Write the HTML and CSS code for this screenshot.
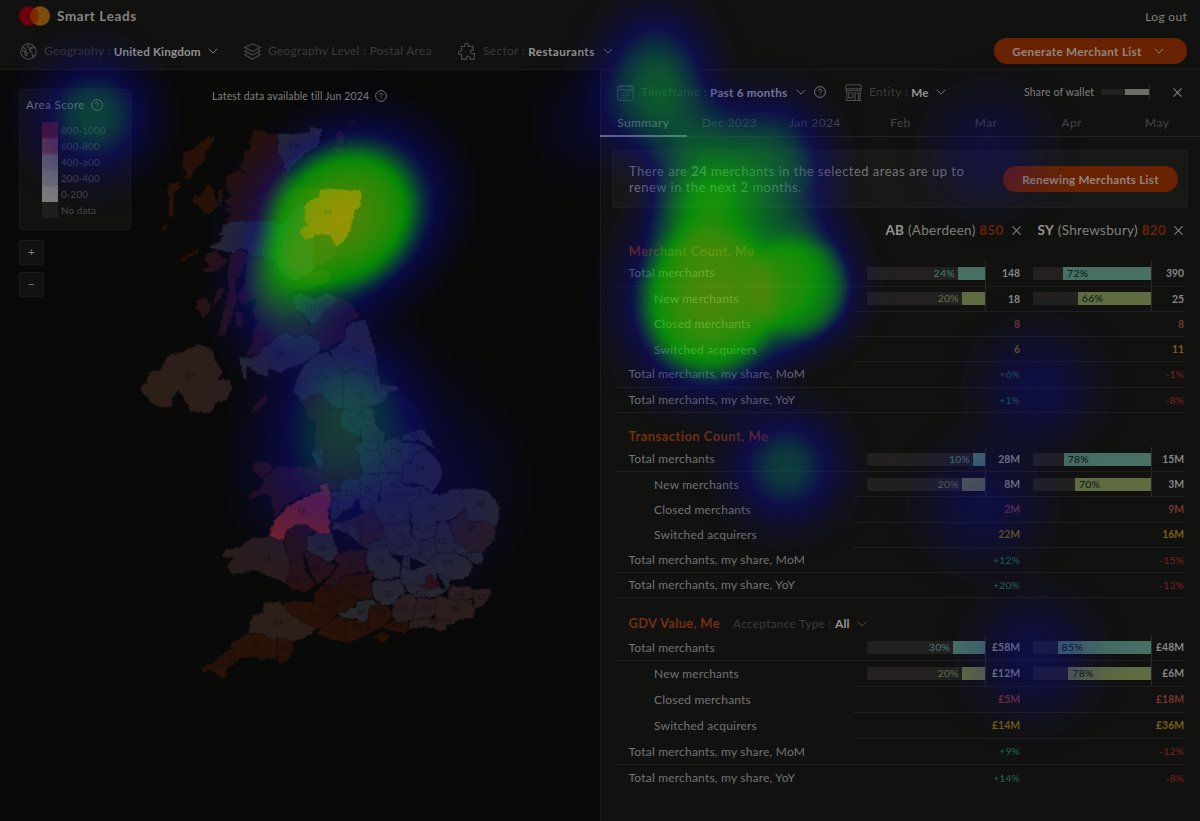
FILE: index.html
```html
<!DOCTYPE html>
<html lang="en">
<head>
<meta charset="utf-8">
<title>Smart Leads</title>
<link rel="stylesheet" href="styles.css">
</head>
<body>
<svg class="defs" width="0" height="0" aria-hidden="true">
  <symbol id="chev" viewBox="0 0 10 6"><path d="M.7.8 5 5.1 9.3.8"/></symbol>
  <symbol id="close" viewBox="0 0 8 8"><path d="M.4.4 7.6 7.6M7.6.4.4 7.6"/></symbol>
  <symbol id="help" viewBox="0 0 12 12"><circle cx="6" cy="6" r="5.4"/><path d="M4.5 4.8c0-2 3.1-2 3.1-.1C7.600 5.900 6 5.800 6 7.200M6 8.300v.8"/></symbol>
</svg>
<header class="header">
  <div class="brand-row">
    <div class="brand">
      <svg class="logo" viewBox="0 0 31 20"><circle cx="9.800" cy="10" r="9.800" fill="#6d000c"/><circle cx="21.200" cy="10" r="9.800" fill="#7c4b0b"/><path d="M15.500 2a9.800 9.800 0 0 1 0 16 9.800 9.800 0 0 1 0-16Z" fill="#7d2600"/></svg>
      <span>Smart Leads</span>
    </div>
    <a class="logout">Log out</a>
  </div>
  <div class="filter-row">
    <div class="filter geo"><svg class="ic" viewBox="0 0 16 16"><circle cx="8" cy="8" r="7.300"/><path d="M2 4.400l2.200.4 1.500 1.600-.8 1.500 2 1.500-.6 2.600-1.500-1.200-.4-2.200-2.700-2M8 1l-1 2.300 1.400 1.500M14 4.500l-3-.8-2.300 1.800.4 2 1.900.6.3 2 .8 2.800 1.700-2M9 6l3-.8"/></svg><span class="key">Geography :</span><b>United Kingdom</b><svg class="chev"><use href="#chev"/></svg></div>
    <div class="filter level"><svg class="ic" viewBox="0 0 16 16"><path d="M8 .7 15.300 4.300 8 8 .7 4.300ZM2.500 6.600.7 7.600 8 11.300l7.300-3.700-1.800-1M2.500 9.900.7 10.900 8 15.300l7.300-4.400-1.800-1"/></svg><span class="key">Geography Level : Postal Area</span></div>
    <div class="filter sector"><svg class="ic" viewBox="0 0 16 16"><path d="M3.400 3.300h3V1.900a1.700 1.700 0 0 1 3.400 0v1.400h4.500v3.400h-1.100a1.600 1.600 0 0 0 0 3.200h2.200v5.300h-4v-1.300a1.600 1.600 0 0 0-3.200 0v1.300H3.400v-4.300H2.200a1.700 1.700 0 0 1 0-3.400h1.200Z"/></svg><span class="key">Sector :</span><b>Restaurants</b><svg class="chev"><use href="#chev"/></svg></div>
    <button class="btn generate">Generate Merchant List<svg class="chev"><use href="#chev"/></svg></button>
  </div>
</header>
<main class="main">
  <section class="map-pane">
    <svg class="map" viewBox="0 70 600 751">
      <defs>
        <filter id="coast" x="-5%" y="-5%" width="110%" height="110%" color-interpolation-filters="sRGB"><feTurbulence type="fractalNoise" baseFrequency=".2" numOctaves="2" seed="4"/><feDisplacementMap in="SourceGraphic" scale="4.500" xChannelSelector="R" yChannelSelector="G"/></filter>
      </defs>
      <g filter="url(#coast)" class="areas">
        <g transform="translate(130 110) scale(.33333)">
          <path class="o" d="M252 72 255 85 240 112 222 130 232 140 212 165 195 175 178 205 160 208 172 188 158 172 160 130 175 122 190 118 215 92ZM120 222 150 212 150 232 132 250 132 290 130 320 115 318 118 265 110 235ZM238 222 250 240 258 270 268 285 240 310 225 315 215 295 188 275 192 255 212 262 222 240ZM95 352 112 340 108 355 98 365ZM155 445 180 430 208 416 200 430 170 448 158 455ZM264 245 280 235 275 270 280 300 262 270Z"/>
          <path class="o" d="M375 58 400 62 412 72 443 68 443 125 460 160 470 188 482 205 495 210 470 240 540 230 572 242 560 268 545 275 520 280 500 295 480 315 455 338 395 330 340 338 300 335 285 330 305 315 282 295 300 290 285 270 305 255 290 240 288 198 312 188 320 180 345 190 328 170 345 150 340 125 362 118 358 90Z"/>
          <path class="g" d="M443 68 480 72 535 68 540 50 575 55 568 90 560 112 530 125 505 152 490 165 472 188 460 160 443 125Z"/>
          <path class="r" d="M615 70 640 65 642 90 635 105 618 95ZM650 30 665 35 690 50 703 25 695 48 670 44ZM612 112 625 110 640 132 622 130ZM655 90 672 95 665 105Z"/>
          <path class="g" d="M285 340 300 335 400 330 455 340 480 315 515 280 530 290 522 330 530 345 508 365 522 385 550 385 555 420 550 480 535 500 490 515 460 498 440 470 440 458 405 455 395 435 360 440 350 420 330 415 310 430 235 410 260 400 280 380 265 375Z"/>
          <path class="ab" d="M525 280 545 268 565 262 570 240 590 235 660 240 690 238 695 255 692 285 672 310 668 340 655 375 640 395 620 410 600 385 590 375 560 375 550 385 522 388 508 365 530 345 522 330Z"/>
          <path class="o" d="M550 385 565 375 595 375 622 410 612 440 580 465 550 470 555 420ZM520 510 540 490 585 478 610 500 580 525 540 540 505 540 490 520Z"/>
          <path class="r" d="M225 430 260 425 280 445 300 450 270 478 225 490 215 480 240 470 225 450ZM265 530 285 535 262 580 245 590ZM225 560 242 585 240 610 220 620 195 590 205 570ZM315 610 335 605 342 640 328 658 315 640ZM300 440 325 418 350 430 340 480 315 520 322 570 300 630 285 680 265 678 280 600 300 540 290 500Z"/>
          <path class="r" d="M330 415 350 430 360 440 395 435 405 455 440 458 445 475 460 498 440 520 465 560 440 570 400 545 385 580 370 560 340 590 320 560 345 520 350 470Z"/>
          <path class="r" d="M460 498 490 515 505 540 480 555 490 570 500 600 530 630 540 650 530 690 440 700 370 690 385 640 365 600 385 580 400 545 440 570 465 560 440 520Z"/>
          <path class="g" d="M485 558 510 552 560 568 590 548 625 560 600 590 580 605 562 635 545 645 530 620 500 600Z"/>
          <path class="r" d="M625 562 660 575 690 620 650 640 650 680 615 700 585 720 530 690 530 660 545 645 565 630 580 605Z"/>
        </g>
        <g transform="translate(130 320) scale(.33333)">
          <path class="r" d="M370 35 380 0 470 0 540 20 535 40 500 55 480 40 465 30 445 50 420 65 400 80 385 105 345 110 365 70Z"/>
          <path class="g" d="M465 30 480 45 500 55 525 40 560 60 578 85 560 105 525 125 490 140 450 158 415 145 412 175 385 160 355 140 345 150 355 175 345 178 330 140 328 110 350 115 385 105 395 80 420 70 445 50Z"/>
          <path class="g" d="M650 25 665 5 700 0 715 15 720 50 738 100 742 140 710 138 660 150 638 158 615 130 600 95 640 60Z"/>
          <path class="g" d="M590 95 605 110 620 135 640 160 640 262 610 268 570 220 545 225 515 248 490 215 498 180 515 150 525 130 560 105Z"/>
          <path class="g" d="M640 160 665 150 735 170 730 195 745 225 770 240 728 262 700 262 690 278 660 275 640 262ZM665 150 710 138 742 142 735 170ZM742 142 750 190 800 200 808 212 775 215 770 245 745 235 730 195 735 170Z"/>
          <path class="d" d="M770 240 775 220 808 212 840 240 870 270 885 290 878 325 815 345 810 360 765 365 755 330 735 300 728 265Z"/>
          <path class="g" d="M815 345 878 325 900 350 917 388 890 375 870 362 815 364Z"/>
          <path class="o" d="M515 248 545 222 575 220 612 268 640 265 630 310 690 355 690 430 698 480 640 478 620 485 570 480 520 470 520 445 560 430 545 400 555 380 550 350 560 330 555 300 535 290Z"/>
          <path class="o" d="M560 330 600 320 640 340 680 370 650 385 600 390 555 380ZM560 430 600 410 640 440 640 478M600 390 600 410M640 440 690 430M570 480 580 445"/>
          <path class="g" d="M640 265 690 280 680 310 690 320 695 350 660 340 630 310ZM690 280 705 260 728 265 740 320 690 320 680 310ZM690 320 740 320 765 340 760 370 700 360 695 345ZM672 390 700 362 745 368 745 390 710 392 690 402Z"/>
          <path class="g" d="M690 400 710 392 745 390 760 430 775 450 770 460 700 460 690 435ZM745 368 800 350 815 368 870 370 890 385 850 405 850 420 820 430 815 458 775 455 760 425 745 395ZM850 405 885 385 915 410 935 440 938 470 920 500 905 520 880 495 820 490 815 455 820 430 845 425Z"/>
          <path class="g" d="M545 400 585 382 575 420 578 440 565 445Z"/>
          <path class="r" d="M365 440 380 425 415 425 430 445 400 475 375 460ZM400 478 440 440 515 440 525 485 570 495 560 515 510 530 460 560 440 590 430 585 425 530 400 520 355 540 365 520 395 500ZM412 220 410 245 385 270 365 282 375 255 395 232Z"/>
          <path class="r" d="M515 440 570 450 580 480 635 485 630 515 600 510 570 495 525 485Z"/>
          <path class="t" d="M205 72 250 90 255 120 280 155 262 180 300 178 305 210 290 240 262 245 240 280 180 275 175 255 145 212 125 235 130 260 80 258 50 235 28 205 50 185 60 155 90 150 115 105 155 98Z"/>
          <path class="g" d="M630 490 655 475 690 478 695 530 650 560 605 565 600 515 630 515ZM690 475 700 460 745 465 755 500 745 530 735 565 700 555 690 520ZM745 458 815 458 820 495 870 500 870 530 800 530 755 545 745 520 755 500Z"/>
        </g>
        <g transform="translate(190 470) scale(.33333)">
          <path class="g" d="M420 90 450 75 520 80 550 100 600 75 690 75 660 130 650 260 560 240 520 235 480 200 425 165Z"/>
          <path class="g" d="M690 45 725 70 730 70 750 75 790 55 810 58 820 100 825 120 780 150 740 155 700 190 665 155 658 100 690 80Z"/>
          <path class="sy" d="M390 45 400 40 415 42 425 90 415 125 422 190 400 195 375 185 350 165 320 165 290 180 280 215 235 200 255 150 290 110 330 90 365 75 395 60Z"/>
          <path class="g" d="M425 90 450 85 440 130 420 140ZM550 100 590 88 650 90 658 125 630 160 590 165 560 150 545 125ZM425 165 480 155 475 180 430 180Z"/>
          <path class="d" d="M430 150 460 125 490 110 495 85 512 90 510 115 525 125 480 150 425 160Z"/>
          <path class="p" d="M480 155 525 125 545 112 580 175 560 200 520 235 510 225 500 180ZM530 120 580 165 580 205 550 215 520 235 510 220Z"/>
          <path class="g" d="M350 215 345 200 380 190 430 190 440 235 445 250 415 280 380 255 350 245Z"/>
          <path class="d" d="M422 185 470 190 505 215 512 245 470 248 440 235Z"/>
          <path class="r" d="M290 180 320 165 350 165 375 185 350 200 350 240 320 270 300 275 285 230ZM300 275 340 245 380 255 415 280 440 285 425 310 380 345 350 365 310 360 285 335 300 300ZM340 245 345 300 380 345"/>
          <path class="p" d="M280 215 240 200 185 205 150 230 105 240 97 262 130 265 110 290 130 315 190 300 250 325 285 340 300 300 298 270 285 235Z"/>
          <path class="r" d="M445 250 470 240 530 240 525 280 530 305 460 320 440 345 425 355 400 340 430 310 450 285 432 270Z"/>
          <path class="g" d="M580 175 590 165 630 160 658 155 665 200 625 240 595 215 585 195ZM600 250 625 240 650 190 690 210 690 255 640 260ZM530 240 565 225 590 225 600 250 630 280 630 320 590 330 560 330 540 305 525 280ZM530 240 550 215 585 205 595 215 620 240 600 250 590 225ZM690 210 735 205 740 250 710 275 690 255ZM665 155 700 190 740 155 735 205 690 210 665 200ZM735 205 740 165 765 148 785 180 795 215 810 225 790 245 740 250ZM810 58 860 55 900 70 925 100 928 145 915 170 890 155 830 158 825 120 820 100ZM790 245 810 225 845 245 880 248 875 280 845 280 830 262ZM740 250 790 245 830 265 850 290 830 325 780 330 745 310 710 275Z"/>
          <path class="p" d="M775 160 825 120 835 158 890 155 917 170 915 210 880 248 840 245 800 220 785 185Z"/>
          <path class="g" d="M630 320 640 260 690 255 720 280 745 310 785 330 770 365 720 385 680 380 650 360ZM660 260 665 300 710 285M635 290 665 300 700 320M650 340 690 350 710 385M745 310 735 345 770 360M560 330 590 335 635 325 645 365 625 380 615 405 580 405 550 385 545 335ZM445 430 495 410 500 395 545 388 565 400 535 415 535 450 515 458 490 445 455 445Z"/>
          <path class="hot" d="M705 320 720 312 735 330 752 345 740 355 715 360 690 350 712 338Z"/>
          <path class="o" d="M460 320 555 305 540 335 548 385 500 390 450 355 455 330ZM440 345 460 325 455 355 500 390 490 410 445 430 400 415 370 400 372 370 400 345ZM450 355 400 415ZM270 400 330 392 395 400 445 430 400 475 380 475 335 455 290 425ZM535 415 565 400 600 410 605 440 580 470 560 480 535 490ZM375 490 400 470 445 435 455 445 490 450 535 455 535 490 495 515 440 515ZM460 445 470 515ZM545 500 580 485 602 495 580 520ZM580 470 605 450 650 455 655 480 640 490 590 478ZM170 490 220 490 250 510 260 500 262 570 230 560 215 575 195 560 150 565 135 580 110 600 130 540 120 525ZM130 535 135 580 110 600 110 615 95 628 75 610 60 600 40 610 35 595 80 570 105 545ZM262 500 290 498 308 515 310 545 290 570 275 585 258 560Z"/>
          <path class="t" d="M610 405 640 370 675 375 680 400 665 450 620 455 605 440ZM680 380 720 388 738 385 735 430 720 445 665 450 670 420ZM655 460 665 450 720 445 780 450 765 485 740 478 700 472 655 478ZM738 375 775 385 845 390 855 420 850 445 800 450 780 465 735 445ZM775 360 785 345 850 355 850 385 800 395 775 385ZM850 360 903 355 900 380 880 405 855 420 850 385ZM220 400 270 392 290 425 335 455 380 475 360 495 310 515 290 505 260 500 250 515 220 490 175 488 185 435 220 430Z"/>
        </g>
      </g>
      <g class="codes">
        <text x="295" y="149">KW</text><text x="258" y="195">IV</text><text x="328" y="215">AB</text><text x="277" y="248">PH</text><text x="325" y="255">DD</text><text x="243" y="274">PA</text><text x="311" y="310">EH</text><text x="331" y="327">TD</text><text x="292" y="320">ML</text><text x="270" y="333">KA</text>
        <text x="281" y="357">DG</text><text x="356" y="352">NE</text><text x="324" y="380">CA</text><text x="361" y="398">DL</text><text x="383" y="390">TS</text><text x="367" y="374" class="s">DH</text><text x="332" y="410">LA</text><text x="191" y="379">BT</text><text x="400" y="420">YO</text><text x="416" y="438">HU</text><text x="351" y="425">BD</text><text x="366" y="419" class="s">HG</text><text x="376" y="437">LS</text><text x="396" y="454">DN</text><text x="320" y="458">L</text><text x="380" y="468">S</text><text x="420" y="471">LN</text><text x="287" y="489">LL</text><text x="349" y="496">ST</text><text x="369" y="493">DE</text><text x="395" y="488">NG</text>
        <text x="302" y="515">SY</text><text x="433" y="511">PE</text><text x="481" y="507">NR</text><text x="392" y="517" class="s">LE</text><text x="472" y="532">IP</text><text x="334" y="502" class="s">TF</text><text x="345" y="528" class="s">DY</text><text x="360" y="526">B</text><text x="376" y="533">CV</text><text x="401" y="537" class="s">NN</text><text x="407" y="547" class="s">MK</text><text x="427" y="551">SG</text><text x="443" y="544">CB</text><text x="467" y="558">CO</text><text x="448" y="565">CM</text><text x="322" y="551">HR</text><text x="346" y="546">WR</text><text x="296" y="546">LD</text><text x="267" y="561">SA</text><text x="315" y="571">NP</text><text x="296" y="582">CF</text><text x="352" y="564">GL</text><text x="380" y="565">OX</text><text x="410" y="562" class="s">LU</text><text x="408" y="570" class="s">HP</text><text x="357" y="589">SN</text><text x="327" y="593">BS</text><text x="338" y="605">BA</text><text x="313" y="617">TA</text><text x="361" y="615">SP</text><text x="381" y="614">SO</text><text x="389" y="597">RG</text><text x="402" y="611">GU</text><text x="427" y="610">RH</text><text x="455" y="612">TN</text><text x="460" y="597">ME</text><text x="482" y="600">CT</text><text x="433" y="624">BN</text><text x="396" y="628">PO</text><text x="358" y="630">BH</text><text x="334" y="634" class="s">DT</text><text x="279" y="625">EX</text><text x="255" y="647">PL</text><text x="285" y="652">TQ</text><text x="221" y="667" class="s">TR</text><text x="419" y="595" class="s">KT</text>
      </g>
    </svg>
    <div class="map-controls">
      <div class="legend">
        <h2>Area Score <svg class="help"><use href="#help"/></svg></h2>
        <div class="scale"><div class="swatches"><i class="ramp"></i><i class="none"></i></div>
          <ul><li>800-1000</li><li>600-800</li><li>400-600</li><li>200-400</li><li>0-200</li><li>No data</li></ul></div>
      </div>
      <button class="zoom">+</button>
      <button class="zoom">−</button>
    </div>
    <div class="latest">Latest data available till Jun 2024 <svg class="help"><use href="#help"/></svg></div>
  </section>
  <section class="panel">
    <div class="toolbar">
      <div class="filter time"><svg class="ic" viewBox="0 0 16 16"><rect x=".7" y="2" width="14.600" height="13.300" rx="1.500"/><path d="M.7 5.500h14.600M3.500.4v3M12.500.4v3"/><path class="dots" d="M3.500 12.500h6M3.500 10.500h9M5.500 8.500h7"/></svg><span class="key">Timeframe :</span><b>Past 6 months</b><svg class="chev"><use href="#chev"/></svg><svg class="help"><use href="#help"/></svg></div>
      <div class="filter entity"><svg class="ic" viewBox="0 0 16 16"><path d="M.5 15.500h15M1.700 15.500V6.500M14.300 15.500V6.500M2.500.7h11q2 0 1.900 4.200-.2 1.600-2.200 1.300-1.300-.7-2.600 0-1.300.7-2.600 0-1.300-.7-2.600 0-1.300.7-2.600 0Q.6 6.400.6 4.500.7.700 2.500.7ZM9.500 15.500V8.500h3.300v7M3.500 8.500h4v4.500h-4ZM1 4.500h14"/></svg><span class="key">Entity :</span><b>Me</b><svg class="chev"><use href="#chev"/></svg></div>
      <div class="wallet"><span>Share of wallet</span><div class="mini"><i></i></div><svg class="close"><use href="#close"/></svg></div>
    </div>
    <nav class="tabs"><a class="on">Summary</a><a>Dec 2023</a><a>Jan 2024</a><a>Feb</a><a>Mar</a><a>Apr</a><a>May</a></nav>
    <div class="banner"><p>There are <b>24</b> merchants in the selected areas are up to<br>renew in the next 2 months.</p><button class="btn renew">Renewing Merchants List</button></div>
    <div class="compare">
      <div class="area"><span><b>AB</b> (Aberdeen) <em>850</em></span><svg class="close"><use href="#close"/></svg></div>
      <div class="area"><span><b>SY</b> (Shrewsbury) <em>820</em></span><svg class="close"><use href="#close"/></svg></div>
    </div>
    <section class="metric first">
      <h3>Merchant Count, Me</h3>
      <div class="row full"><span class="label">Total merchants</span><div class="data"><div class="cell"><div class="bar teal"><u>24%</u><i style="width:23%"></i></div></div><b>148</b><div class="cell"><div class="bar teal in"><i style="width:74.5%">72%</i></div></div><b>390</b></div></div>
      <div class="row sub"><span class="label">New merchants</span><div class="data"><div class="cell"><div class="bar olive"><u>20%</u><i style="width:19.500%"></i></div></div><b>18</b><div class="cell"><div class="bar olive in"><i style="width:62%">66%</i></div></div><b>25</b></div></div>
      <div class="row sub"><span class="label">Closed merchants</span><div class="data"><b class="rose">8</b><b class="rose">8</b></div></div>
      <div class="row sub"><span class="label">Switched acquirers</span><div class="data"><b class="gold">6</b><b class="gold">11</b></div></div>
      <div class="row full"><span class="label">Total merchants, my share, MoM</span><div class="data"><b class="up">+6%</b><b class="down">-1%</b></div></div>
      <div class="row full"><span class="label">Total merchants, my share, YoY</span><div class="data"><b class="up">+1%</b><b class="down">-8%</b></div></div>
    </section>
    <section class="metric second">
      <h3>Transaction Count, Me</h3>
      <div class="row full"><span class="label">Total merchants</span><div class="data"><div class="cell"><div class="bar teal"><u>10%</u><i style="width:10%"></i></div></div><b>28M</b><div class="cell"><div class="bar teal in"><i style="width:74%">78%</i></div></div><b>15M</b></div></div>
      <div class="row sub"><span class="label">New merchants</span><div class="data"><div class="cell"><div class="bar olive"><u>20%</u><i style="width:19.500%"></i></div></div><b>8M</b><div class="cell"><div class="bar olive in"><i style="width:64.500%">70%</i></div></div><b>3M</b></div></div>
      <div class="row sub"><span class="label">Closed merchants</span><div class="data"><b class="rose">2M</b><b class="rose">9M</b></div></div>
      <div class="row sub"><span class="label">Switched acquirers</span><div class="data"><b class="gold">22M</b><b class="gold">16M</b></div></div>
      <div class="row full"><span class="label">Total merchants, my share, MoM</span><div class="data"><b class="up">+12%</b><b class="down">-15%</b></div></div>
      <div class="row full"><span class="label">Total merchants, my share, YoY</span><div class="data"><b class="up">+20%</b><b class="down">-13%</b></div></div>
    </section>
    <section class="metric third">
      <h3>GDV Value, Me <span class="accept">Acceptance Type : <b>All</b></span><svg class="chev"><use href="#chev"/></svg></h3>
      <div class="row full"><span class="label">Total merchants</span><div class="data"><div class="cell"><div class="bar teal"><u>30%</u><i style="width:27%"></i></div></div><b>£58M</b><div class="cell"><div class="bar teal in"><i style="width:79%">85%</i></div></div><b>£48M</b></div></div>
      <div class="row sub"><span class="label">New merchants</span><div class="data"><div class="cell"><div class="bar olive"><u>20%</u><i style="width:19.500%"></i></div></div><b>£12M</b><div class="cell"><div class="bar olive in"><i style="width:70%">78%</i></div></div><b>£6M</b></div></div>
      <div class="row sub"><span class="label">Closed merchants</span><div class="data"><b class="rose">£5M</b><b class="rose">£18M</b></div></div>
      <div class="row sub"><span class="label">Switched acquirers</span><div class="data"><b class="gold">£14M</b><b class="gold">£36M</b></div></div>
      <div class="row full"><span class="label">Total merchants, my share, MoM</span><div class="data"><b class="up">+9%</b><b class="down">-12%</b></div></div>
      <div class="row last"><span class="label">Total merchants, my share, YoY</span><div class="data"><b class="up">+14%</b><b class="down">-8%</b></div></div>
    </section>
  </section>
</main>
<svg class="heat" viewBox="0 0 1200 821" aria-hidden="true">
  <defs>
    <radialGradient id="soft"><stop offset="0" stop-color="#fff"/><stop offset=".2" stop-color="#fff" stop-opacity=".92"/><stop offset=".4" stop-color="#fff" stop-opacity=".68"/><stop offset=".6" stop-color="#fff" stop-opacity=".38"/><stop offset=".8" stop-color="#fff" stop-opacity=".13"/><stop offset="1" stop-color="#fff" stop-opacity="0"/></radialGradient>
    <radialGradient id="core"><stop offset="0" stop-color="#fff" stop-opacity=".88"/><stop offset=".2" stop-color="#fff" stop-opacity=".83"/><stop offset=".36" stop-color="#fff" stop-opacity=".75"/><stop offset=".46" stop-color="#fff" stop-opacity=".66"/><stop offset=".54" stop-color="#fff" stop-opacity=".46"/><stop offset=".62" stop-color="#fff" stop-opacity=".29"/><stop offset=".78" stop-color="#fff" stop-opacity=".13"/><stop offset="1" stop-color="#fff" stop-opacity="0"/></radialGradient>
    <filter id="ramp" filterUnits="userSpaceOnUse" x="0" y="0" width="1200" height="821" color-interpolation-filters="sRGB">
      <feGaussianBlur in="SourceGraphic" stdDeviation="5" result="smooth"/>
      <feComponentTransfer in="smooth" result="hue"><feFuncR type="table" tableValues=".05 .05 .04 .04 .03 .04 .02 .03 .26 .52 .6"/><feFuncG type="table" tableValues=".05 .05 .04 .05 .32 .52 .7 .86 .85 .8 .8"/><feFuncB type="table" tableValues=".6 .6 .6 .65 .5 .34 .16 .03 .03 .03 .02"/></feComponentTransfer>
      <feColorMatrix in="smooth" values="0 0 0 0 0 0 0 0 0 0 0 0 0 0 0 1 0 0 0 0" result="lum"/>
      <feComponentTransfer in="lum" result="mask"><feFuncA type="table" tableValues="0 .12 .26 .38 .45 .52 .58 .62 .62 .62 .62"/></feComponentTransfer>
      <feComposite in="hue" in2="mask" operator="in"/>
    </filter>
  </defs>
  <g filter="url(#ramp)">
    <rect x="-50" y="-50" width="1300" height="921" fill="#000"/>
    <ellipse cx="341" cy="220" rx="148" ry="124" transform="rotate(-38 341 220)" fill="url(#core)"/>
    <circle cx="380" cy="195" r="130" fill="url(#soft)" opacity=".14"/>
    <circle cx="286" cy="272" r="55" fill="url(#soft)" opacity=".35"/>
    <circle cx="276" cy="312" r="85" fill="url(#soft)" opacity=".33"/>
    <circle cx="352" cy="385" r="115" fill="url(#soft)" opacity=".27"/>
    <circle cx="322" cy="430" r="125" fill="url(#soft)" opacity=".25"/>
    <circle cx="300" cy="500" r="100" fill="url(#soft)" opacity=".14"/>
    <circle cx="410" cy="485" r="155" fill="url(#soft)" opacity=".27"/>
    <circle cx="94" cy="116" r="98" fill="url(#soft)" opacity=".48"/>
    <ellipse cx="656" cy="80" rx="92" ry="112" fill="url(#soft)" opacity=".52"/>
    <circle cx="590" cy="125" r="85" fill="url(#soft)" opacity=".16"/>
    <circle cx="690" cy="140" r="85" fill="url(#soft)" opacity=".28"/>
    <circle cx="768" cy="155" r="98" fill="url(#soft)" opacity=".5"/>
    <circle cx="785" cy="220" r="90" fill="url(#soft)" opacity=".28"/>
    <ellipse cx="705" cy="205" rx="82" ry="95" fill="url(#soft)" opacity=".62"/>
    <ellipse cx="709" cy="300" rx="125" ry="140" fill="url(#core)"/>
    <circle cx="798" cy="287" r="92" fill="url(#core)" opacity=".8"/>
    <circle cx="786" cy="467" r="94" fill="url(#soft)" opacity=".46"/>
    <circle cx="988" cy="150" r="95" fill="url(#soft)" opacity=".24"/>
    <circle cx="1037" cy="388" r="95" fill="url(#soft)" opacity=".28"/>
    <circle cx="983" cy="505" r="98" fill="url(#soft)" opacity=".27"/>
    <circle cx="1033" cy="658" r="98" fill="url(#soft)" opacity=".29"/>
  </g>
</svg>
</body>
</html>
```
FILE: styles.css
```css
* { box-sizing: border-box; }
body { margin: 0; width: 1200px; height: 821px; overflow: hidden; position: relative; background: #11110f; color: #80807e; font: 12px/1.2 Lato, "Open Sans", sans-serif; letter-spacing: .3px; }
.defs { position: absolute; }
svg { fill: none; stroke: currentColor; flex: none; }
b { font-weight: 700; }
button { font: inherit; letter-spacing: inherit; color: inherit; border: 0; padding: 0; }
.chev { width: 10px; height: 6px; }
.close { width: 9px; height: 9px; }
.help { width: 12px; height: 12px; stroke-width: .9; }
.ic { width: 17px; height: 17px; color: #4d4d4b; }

.header { height: 70px; border-bottom: 1px solid #1d1d1b; padding: 0 13px 0 19px; }
.brand-row { height: 32px; display: flex; justify-content: space-between; align-items: center; }
.brand { display: flex; align-items: center; gap: 7px; font-size: 13.500px; font-weight: 700; color: #858583; }
.brand span { letter-spacing: .6px; }
.logo { width: 31px; height: 20px; stroke: none; }
.logout { padding-top: 3px; }
.filter-row { height: 38px; display: flex; align-items: center; }
.filter { display: flex; align-items: center; white-space: nowrap; }
.filter .key { color: #3b3b39; margin: 0 3px 0 7px; }
.filter b { color: #949492; font-size: 11.700px; letter-spacing: .25px; line-height: 14px; }
.geo b { letter-spacing: .15px; }
.filter .chev { margin-left: 7px; }
.sector .key { margin-left: 8px; }
.sector b { letter-spacing: .45px; }
.sector .chev { margin-left: 8px; }
.filter-row .ic { margin-left: 1px; }
.geo { width: 224px; }
.level { width: 214px; }
.level .key { letter-spacing: .27px; }
.sector { flex: 1; }
.btn { background: #6a2300; border-radius: 13px; font-weight: 700; font-size: 11.700px; letter-spacing: .3px; color: #8f8581; }
.generate { width: 193px; height: 26px; display: flex; align-items: center; justify-content: center; gap: 12px; padding-right: 5px; }

.main { display: flex; height: 751px; }
.map-pane { width: 600px; background: #090907; display: grid; grid-template-columns: 600px; grid-template-rows: 751px; }
.map-pane > * { grid-area: 1 / 1; }
.map { width: 600px; height: 751px; stroke: none; }
.areas path { stroke: #100e10; stroke-width: 2px; stroke-opacity: .6; }
.areas .o { fill: #281106; } .areas .g { fill: #28282b; } .areas .r { fill: #281212; } .areas .p { fill: #2a1d1c; }
.areas .t { fill: #2c1f1a; } .areas .d { fill: #0b0b14; } .areas .ab { fill: #c93600; } .areas .sy { fill: #7c2420; } .areas .hot { fill: #33100a; }
.codes { fill: #0d0d0f; fill-opacity: .75; font: 7px Lato, sans-serif; text-anchor: middle; letter-spacing: 0; }
.codes .s { font-size: 5px; }
.map-controls { padding: 19px 0 0 19px; width: 131px; display: flex; flex-direction: column; align-items: flex-start; z-index: 1; }
.legend { width: 112px; height: 141px; padding: 9px 6px; background: #111110; border: 1px solid #191918; border-radius: 3px; margin-bottom: 10px; }
.legend h2 { margin: 0; font-size: 11.500px; font-weight: 400; line-height: 12px; display: flex; gap: 6px; white-space: nowrap; letter-spacing: .42px; }
.scale { display: flex; gap: 3px; padding: 11px 0 0 16px; font-size: 9.700px; color: #4c4c4a; }
.swatches { width: 16px; }
.swatches i { display: block; }
.ramp { height: 80px; background: linear-gradient(#5a171b 0 18%, #693d42 22% 38%, #69636a 42% 58%, #6e6e72 62% 78%, #7c7c7a 82%); }
.none { height: 16px; background: #1e1e1c; }
.scale ul { margin: 0; padding: 0; list-style: none; line-height: 16px; letter-spacing: .2px; }
.zoom { width: 25px; height: 25px; margin-bottom: 7px; background: #11110f; border: 1px solid #1b1b19; border-radius: 2px; font-size: 12px; }
.latest { justify-self: start; align-self: start; padding: 20px 0 0 212px; display: flex; gap: 6px; align-items: center; font-size: 10.500px; letter-spacing: .13px; }

.panel { width: 600px; border-left: 1px solid #1c1c1a; }
.toolbar { height: 44px; display: flex; align-items: center; padding-left: 16px; }
.time { width: 228px; }
.time .chev { margin-left: 9px; }
.time .help { margin-left: 8px; }
.time .dots { stroke-dasharray: 1.200 .7; }
.entity { width: 179px; }
.wallet { display: flex; align-items: center; font-size: 10.500px; letter-spacing: .15px; white-space: nowrap; }
.wallet .close { margin-left: 23px; }
.mini { width: 49px; height: 16px; margin-left: 7px; padding: 5px 0; border-right: 1px solid #2a2a28; }
.mini i { display: block; height: 6px; background: linear-gradient(90deg, #21211f 50%, #6e6e69 50%); }
.tabs { display: grid; grid-template-columns: repeat(7, 1fr); height: 23px; border-bottom: 1px solid #232321; text-align: center; line-height: 18px; letter-spacing: .4px; color: #474745; }
.tabs .on { color: #848482; border-bottom: 2px solid #8a8a88; height: 23px; margin-left: -1px; }
.banner { margin: 13px 12px 0 11px; height: 58px; padding: 0 9px 0 16px; border: 1px solid #1f1f1d; border-radius: 3px; background: #181816; display: flex; justify-content: space-between; align-items: center; }
.banner p { margin: 0; font-size: 13px; line-height: 16px; letter-spacing: .48px; color: #777775; }
.renew { width: 175px; height: 26px; letter-spacing: .25px; }
.compare { height: 44px; padding-right: 17px; display: flex; justify-content: flex-end; align-items: center; gap: 17px; font-size: 13.500px; }
.compare b, .compare em { font-weight: 700; font-style: normal; }
.compare b { color: #949492; }
.compare em { color: #6a2300; }
.area { display: flex; align-items: center; gap: 8px; white-space: nowrap; letter-spacing: .28px; }

.metric { padding: 0 16px 0 15px; --row: 25.300px; }
.metric h3 { margin: 0; padding-left: 12.500px; font-size: 13px; font-weight: 700; color: #743013; display: flex; align-items: center; letter-spacing: .35px; }
.first h3 { height: 19.300px; margin-top: -10px; }
.second h3 { height: 20px; margin-top: 14px; letter-spacing: .45px; }
.second { --row: 25.200px; }
.third { --row: 26px; }
.third h3 { height: 23px; margin-top: 14px; letter-spacing: .3px; }
.accept { font-size: 12px; font-weight: 400; color: #3b3b39; margin: 0 7px 0 13px; letter-spacing: .2px; }
.accept b { color: #949492; }
.third .chev { color: #4d4d4b; }
.row { height: var(--row); display: flex; white-space: nowrap; }
.label { width: 239px; padding-left: 12.500px; display: flex; align-items: center; color: #747472; letter-spacing: .2px; }
.sub .label { padding-left: 38px; }
.data { flex: 1; border-bottom: 1px solid #20201e; padding-left: 13px; display: grid; grid-template-columns: 119px 34px 13px 119px 32px; align-items: center; font-size: 10.400px; }
.full .label { border-bottom: 1px solid #20201e; }
.last .data { border: 0; }
.data > b { text-align: right; color: #868684; letter-spacing: 0; grid-column: 2; justify-self: end; }
.data > b:last-child { grid-column: 5; }
.cell { grid-column: 1; align-self: stretch; display: flex; align-items: center; border-right: 1px solid #2a2a28; }
.cell ~ .cell { grid-column: 4; }
.bar { flex: 1; height: 13px; display: flex; justify-content: flex-end; align-items: center; background: #22211f; line-height: 13px; }
.bar i { height: 13px; font-style: normal; color: #0c1512; padding-left: 4px; }
.bar:not(.in) i { padding: 0; }
.bar u { text-decoration: none; margin-right: 3px; }
.teal i { background: #476f64; } .teal u { color: #4a7d70; }
.olive i { background: #5f6b40; } .olive u { color: #667447; }
.data .rose { color: #773530; } .data .gold { color: #79600f; } .data .up { color: #246650; } .data .down { color: #7b2027; }
.data .up, .data .down { font-weight: 400; letter-spacing: .1px; }
.heat { position: absolute; inset: 0; width: 1200px; height: 821px; stroke: none; pointer-events: none; z-index: 5; }
```
